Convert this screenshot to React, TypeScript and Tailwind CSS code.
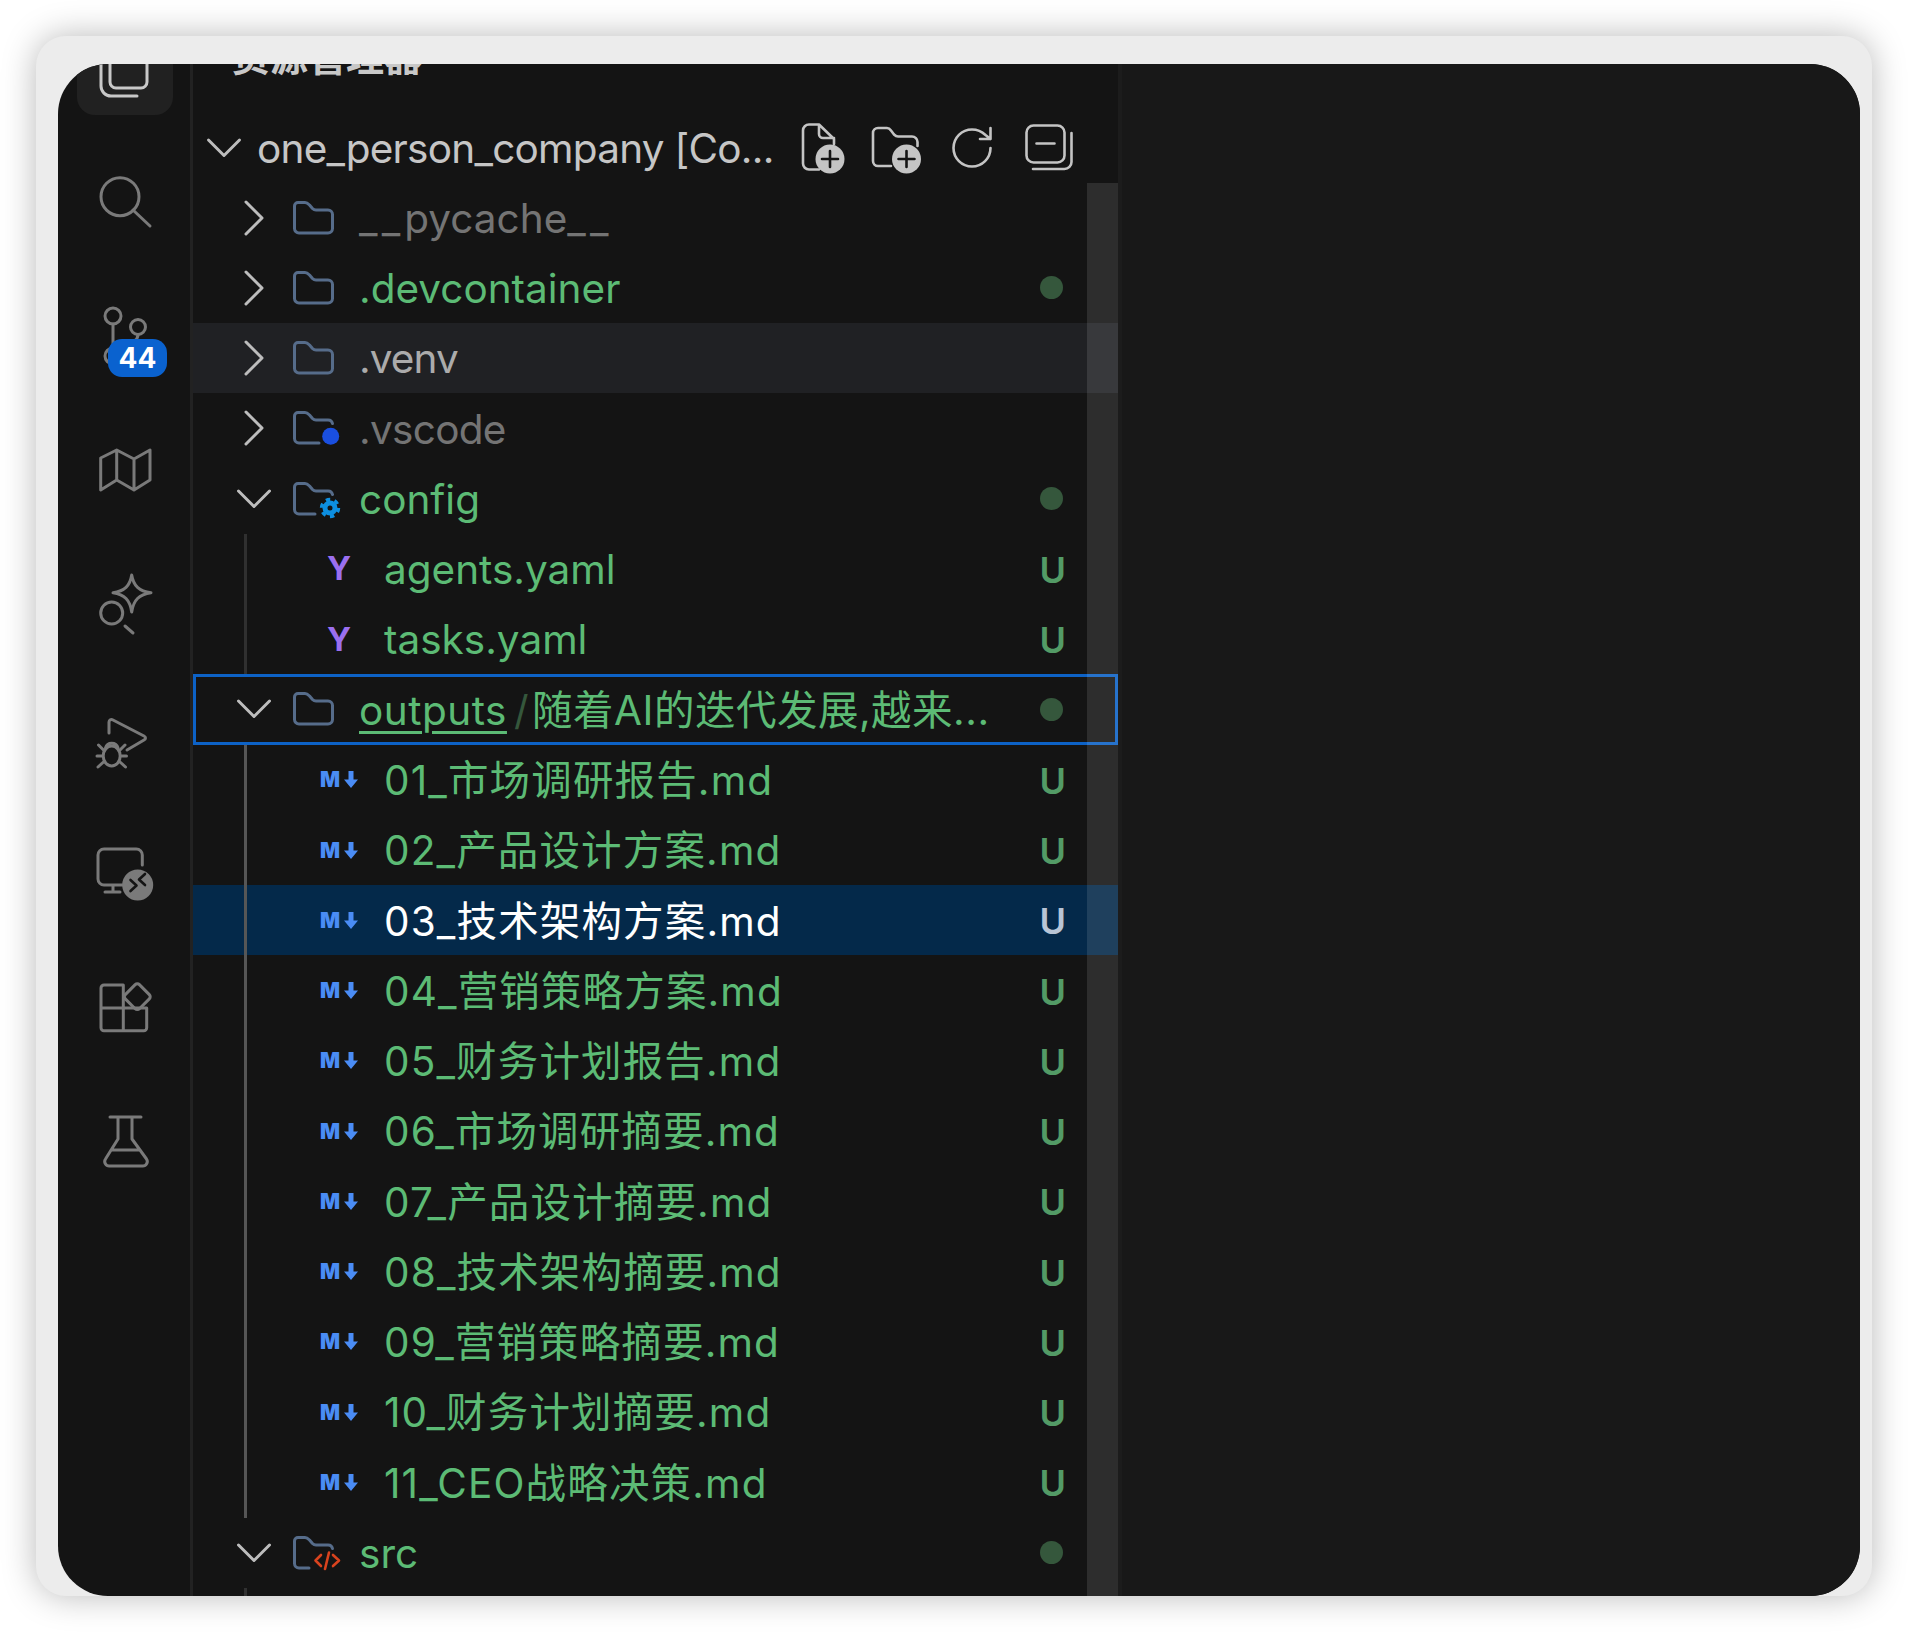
import React from 'react';

const GREEN = 'text-[#5cbb75]';
const ICON = '#7a7a7a';
const HEAD = '#c4c4c4';
const FOLDER = '#566c8a';
const FOLDER_PATH =
  'M8 4.5h7c2 0 3 1 4.5 2.5l3 3.5c1 1 2 1.5 3.5 1.5H38a4.5 4.5 0 0 1 4.5 4.5V30.5a4.5 4.5 0 0 1-4.5 4.5H9a4.5 4.5 0 0 1-4.5-4.5V8A3.5 3.5 0 0 1 8 4.5z';
const OPEN_FOLDER = 'M42.5 15.5A4.5 4.5 0 0 0 38 12H26c-1.5 0-2.5-.5-3.5-1.5l-3-3.5c-1.5-1.5-2.5-2.5-4.5-2.5H8A3.5 3.5 0 0 0 4.5 8V30.5A4.5 4.5 0 0 0 9 35';

type FolderKind = 'plain' | 'vscode' | 'config' | 'src';

const Icon60 = ({ children, color = ICON, width = 3 }: { children: React.ReactNode; color?: string; width?: number }) => (
  <svg width="60" height="60" viewBox="0 0 60 60" fill="none" stroke={color} strokeWidth={width} strokeLinecap="round" strokeLinejoin="round" className="overflow-visible shrink-0">
    {children}
  </svg>
);

const Chevron = ({ open }: { open: boolean }) => (
  <svg width="36" height="36" viewBox="0 0 36 36" fill="none" stroke="#bdbdbd" strokeWidth="3" strokeLinecap="round" strokeLinejoin="round" className="shrink-0">
    <path d={open ? 'M2.5 10L18 25.5 33.5 10' : 'M10 2L26 18 10 34'} />
  </svg>
);

const FolderIcon = ({ kind }: { kind: FolderKind }) => (
  <svg width="52" height="40" viewBox="0 0 52 40" fill="none" stroke={FOLDER} strokeWidth="3" strokeLinecap="round" strokeLinejoin="round" className="shrink-0">
    {kind === 'plain' && <path d={FOLDER_PATH} />}
    {kind === 'vscode' && (
      <>
        <path d={OPEN_FOLDER + 'H29'} />
        <circle cx="40.7" cy="28.3" r="8.5" fill="#1a4fe0" stroke="none" />
      </>
    )}
    {kind === 'config' && (
      <>
        <path d={OPEN_FOLDER + 'H25'} />
        <circle cx="40" cy="29" r="5" stroke="#0d8fe0" strokeWidth="5" strokeLinecap="butt" />
        <circle cx="40" cy="29" r="8.5" stroke="#0d8fe0" strokeWidth="3.4" strokeLinecap="butt" strokeDasharray="4.4 4.5" />
      </>
    )}
    {kind === 'src' && (
      <>
        <path d={OPEN_FOLDER + 'H19'} />
        <path d="M31 22l-5.5 5.5L31 33M43 22l6 5.5-6 5.5M39 19.5L35 36" stroke="#d9431e" strokeWidth="2.6" />
      </>
    )}
  </svg>
);

const MarkdownIcon = () => (
  <span className="flex w-[38px] shrink-0 items-center justify-between">
    <span className="font-['Inter'] text-[21px] leading-none font-black tracking-normal text-[#4a8cf5]">M</span>
    <svg width="14" height="17" viewBox="0 0 14 17" className="shrink-0">
      <path d="M4.5 0h5v8.500H14L7 17 0 8.500h4.500z" fill="#4a8cf5" />
    </svg>
  </span>
);

const YamlIcon = () => (
  <span className="flex w-[38px] shrink-0 justify-center font-['Inter'] text-[33px] leading-none font-bold text-[#9b6ff0]">Y</span>
);

const Dot = () => <span className="ml-auto mr-[55px] h-[23px] w-[23px] shrink-0 rounded-full bg-[#35573c]" />;

const UBadge = ({ selected }: { selected?: boolean }) => (
  <span className={`ml-auto mr-[52px] shrink-0 pt-[2px] text-[36px] leading-none font-semibold tracking-normal ${selected ? 'text-[#b9c5d6]' : 'text-[#539b66]'}`}>U</span>
);

const FolderRow = ({
  name,
  open = false,
  kind = 'plain',
  color = GREEN,
  hover = false,
  dot = false,
  focused = false,
  tracking = '',
  children,
}: {
  name?: string;
  open?: boolean;
  kind?: FolderKind;
  color?: string;
  hover?: boolean;
  dot?: boolean;
  focused?: boolean;
  tracking?: string;
  children?: React.ReactNode;
}) => (
  <div className={`flex h-[70.27px] items-center pl-[43px] ${hover ? 'bg-[#202124]' : ''} ${focused ? 'ring-[3px] ring-inset ring-[#0d62c6]' : ''}`}>
    <Chevron open={open} />
    <span className="ml-[18px]">
      <FolderIcon kind={kind} />
    </span>
    <span className={`ml-[17px] whitespace-nowrap pt-[3px] ${color} ${tracking}`}>{children ?? name}</span>
    {dot && <Dot />}
  </div>
);

const FileRow = ({ name, yaml = false, selected = false }: { name: string; yaml?: boolean; selected?: boolean }) => (
  <div className={`flex h-[70.27px] items-center pl-[127px] ${selected ? 'bg-[#04294a]' : ''}`}>
    {yaml ? <YamlIcon /> : <MarkdownIcon />}
    <span className={`ml-[26px] whitespace-nowrap pt-[3px] ${yaml ? '' : 'tracking-[1.15px]'} ${selected ? 'text-white' : GREEN}`}>{name}</span>
    <UBadge selected={selected} />
  </div>
);

const Guide = ({ color }: { color: string }) => <span className={`absolute top-0 bottom-0 left-[51px] w-[3px] ${color}`} />;

const ActivityItem = ({ children, badge }: { children: React.ReactNode; badge?: string }) => (
  <div className="relative flex h-[134px] items-center justify-center">
    {children}
    {badge && (
      <span className="absolute top-[70px] left-[49px] flex h-[38px] w-[59px] items-center justify-center rounded-[14px] bg-[#0a62cf] font-['Inter'] text-[28px] leading-none font-bold text-white">
        {badge}
      </span>
    )}
  </div>
);

const ActivityBar = () => (
  <div className="w-[135px] shrink-0 border-r-[3px] border-[#222222] pl-[1px]">
    <div className="mx-auto h-[51px] w-[96px] overflow-hidden rounded-b-[18px] bg-[#212121]">
      <svg width="96" height="51" viewBox="0 0 96 51" fill="none" stroke="#c8c8c8" strokeWidth="3" strokeLinecap="round">
        <rect x="33" y="-20" width="37" height="44" rx="6" />
        <path d="M24 0V22a10 10 0 0 0 10 10H60" />
      </svg>
    </div>
    <div className="h-[20px]" />
    <ActivityItem>
      <Icon60>
        <circle cx="25" cy="24.700" r="19" />
        <path d="M38 38l17 16" />
      </Icon60>
    </ActivityItem>
    <ActivityItem badge="44">
      <Icon60>
        <circle cx="18" cy="10" r="8" />
        <circle cx="43" cy="21" r="7.500" />
        <circle cx="18" cy="50" r="8" />
        <path d="M18 18V42M43 28.500c0 12-25 10-25 22" />
      </Icon60>
    </ActivityItem>
    <ActivityItem>
      <Icon60>
        <path d="M5.700 18L21.700 10 39 19 55 10V40L39 50 21.700 40 5.700 50zM21.700 10V40M39 19V50" />
      </Icon60>
    </ActivityItem>
    <ActivityItem>
      <Icon60>
        <path d="M36.700 1C38.500 12 44 17 56 18.700 44 20.500 38.500 26 36.700 38 35 26 29.500 20.500 18 18.700 29.500 17 35 12 36.700 1z" />
        <circle cx="16.700" cy="39" r="11" />
        <path d="M30 52l8 7" />
      </Icon60>
    </ActivityItem>
    <ActivityItem>
      <Icon60>
        <path d="M14 25V14c0-2 2-3 4-2L49 28c2 1 2 3 0 4L32 42" />
        <path d="M10.500 40a6.500 6.500 0 0 1 12.500 0" />
        <ellipse cx="16.700" cy="48" rx="8.500" ry="10" />
        <path d="M8.500 42L3.500 37M25 42L30 37M7 48H2M26.500 48H31.500M8.500 54L3 59M25 54L30.500 59" />
      </Icon60>
    </ActivityItem>
    <ActivityItem>
      <Icon60>
        <path d="M47.300 23V13a6 6 0 0 0-6-6H9a6 6 0 0 0-6 6V37a6 6 0 0 0 6 6H28M18 43V50M10 50H25" />
        <circle cx="42.700" cy="43" r="15.500" fill={ICON} stroke="none" />
        <path d="M35.500 38l6 5.500-6 5.500M50 32l-6 5.500 6 5.500" stroke="#141414" strokeWidth="2.600" />
      </Icon60>
    </ActivityItem>
    <ActivityItem>
      <Icon60>
        <path d="M28.300 9H9a3 3 0 0 0-3 3V51.700a3 3 0 0 0 3 3H48.700a3 3 0 0 0 3-3V32H6M28.300 9V54.700" />
        <rect x="32.300" y="10.700" width="20" height="20" rx="3" transform="rotate(45 42.300 20.700)" />
      </Icon60>
    </ActivityItem>
    <ActivityItem>
      <Icon60>
        <path d="M15 7H46M23 7V29L10.500 49a4.500 4.500 0 0 0 4 7H47.500a4.500 4.500 0 0 0 4-7L37 29V7M16 40H45" />
      </Icon60>
    </ActivityItem>
  </div>
);

const ExplorerHeader = () => (
  <div className="flex h-[69.500px] items-center pr-[39px] pl-[13px] text-[#c6c6c6]">
    <Chevron open />
    <span className="ml-[15px] whitespace-nowrap pt-[3px] tracking-[-0.75px]">one_person_company [Co...</span>
    <div className="ml-auto flex">
      <Icon60 color={HEAD} width={2.600}>
        <path d="M25 51.500H15a6 6 0 0 1-6-6V12.500a6 6 0 0 1 6-6H25L40 21V26M25 6.500V16a4 4 0 0 0 4 4H40" />
        <circle cx="36" cy="41" r="14.500" fill={HEAD} stroke="none" />
        <path d="M36 33V49M28 41H44" stroke="#141414" />
      </Icon60>
      <span className="ml-[13px]">
        <Icon60 color={HEAD} width={2.600}>
          <path d="M24 48H11a5 5 0 0 1-5-5V15a5 5 0 0 1 5-5h9c2 0 3 1 4 2.500l3 4c1 1 2 2 4 2H45a5.500 5.500 0 0 1 5.500 5.500V28" />
          <circle cx="39.500" cy="41" r="14.500" fill={HEAD} stroke="none" />
          <path d="M39.500 33V49M31.500 41H47.500" stroke="#141414" />
        </Icon60>
      </span>
      <span className="ml-[15px]">
        <Icon60 color={HEAD} width={2.600}>
          <path d="M48.500 30a18.500 18.500 0 1 1-18.500-18.500c5 0 9.800 2 13.500 5.500L48.500 21M48.500 10V21H38" />
        </Icon60>
      </span>
      <span className="ml-[17px]">
        <Icon60 color={HEAD} width={2.600}>
          <rect x="7.500" y="7.500" width="38" height="37" rx="7" />
          <path d="M17.500 25.500H35.500M52.500 15V44a7 7 0 0 1-7 7H14" />
        </Icon60>
      </span>
    </div>
  </div>
);

const outputFiles = [
  '01_市场调研报告.md',
  '02_产品设计方案.md',
  '03_技术架构方案.md',
  '04_营销策略方案.md',
  '05_财务计划报告.md',
  '06_市场调研摘要.md',
  '07_产品设计摘要.md',
  '08_技术架构摘要.md',
  '09_营销策略摘要.md',
  '10_财务计划摘要.md',
  '11_CEO战略决策.md',
];

const Explorer = () => (
  <div className="relative w-[925px] shrink-0 font-['Inter','Noto_Sans_CJK_SC',sans-serif] text-[40.500px] leading-none">
    <div className="flex h-[49px] items-start">
      <div className="-mt-[27px] ml-[39px] h-[40px] text-[38px] leading-[40px] font-bold text-[#c8c8c8]">资源管理器</div>
    </div>
    <ExplorerHeader />
    <FolderRow color="text-[#747474]">
      <span className="tracking-[4.200px]">__</span>pycache<span className="tracking-[4.200px]">__</span>
    </FolderRow>
    <FolderRow name=".devcontainer" dot />
    <FolderRow name=".venv" color="text-[#ababab]" hover tracking="tracking-[-0.9px]" />
    <FolderRow name=".vscode" kind="vscode" color="text-[#747474]" tracking="tracking-[-0.7px]" />
    <FolderRow name="config" kind="config" open dot />
    <div className="relative">
      <FileRow name="agents.yaml" yaml />
      <FileRow name="tasks.yaml" yaml />
      <Guide color="bg-[#303030]" />
    </div>
    <FolderRow open dot focused tracking="tracking-[0.5px]">
      <span className="underline decoration-[3px] underline-offset-[6px]">outputs</span>
      <span className="ml-[7px] text-[#35573c]">/</span>
      <span className="ml-[3px]">随着AI的迭代发展,越来...</span>
    </FolderRow>
    <div className="relative">
      {outputFiles.map((name, i) => (
        <FileRow key={name} name={name} selected={i === 2} />
      ))}
      <Guide color="bg-[#565656]" />
    </div>
    <FolderRow name="src" kind="src" open dot />
    <div className="relative h-[20px]">
      <Guide color="bg-[#303030]" />
    </div>
    {/* overlay scrollbar */}
    <div className="absolute top-[119px] right-0 bottom-0 w-[31px] bg-white/[0.11]" />
  </div>
);

export default function App() {
  return (
    <div className="h-[1632px] w-[1908px] overflow-hidden bg-white px-[36px] pt-[36px]">
      <div className="h-[1560px] w-[1836px] rounded-[30px] bg-[#ececec] pt-[28px] pr-[12px] pl-[22px] shadow-[0_0_34px_rgba(0,0,0,0.28)]">
        <div className="flex h-full overflow-hidden rounded-[50px] bg-[#141414]">
          <ActivityBar />
          <Explorer />
          <div className="flex-1 border-l-[4px] border-[#1c1c1c] bg-[#181818]" />
        </div>
      </div>
    </div>
  );
}
